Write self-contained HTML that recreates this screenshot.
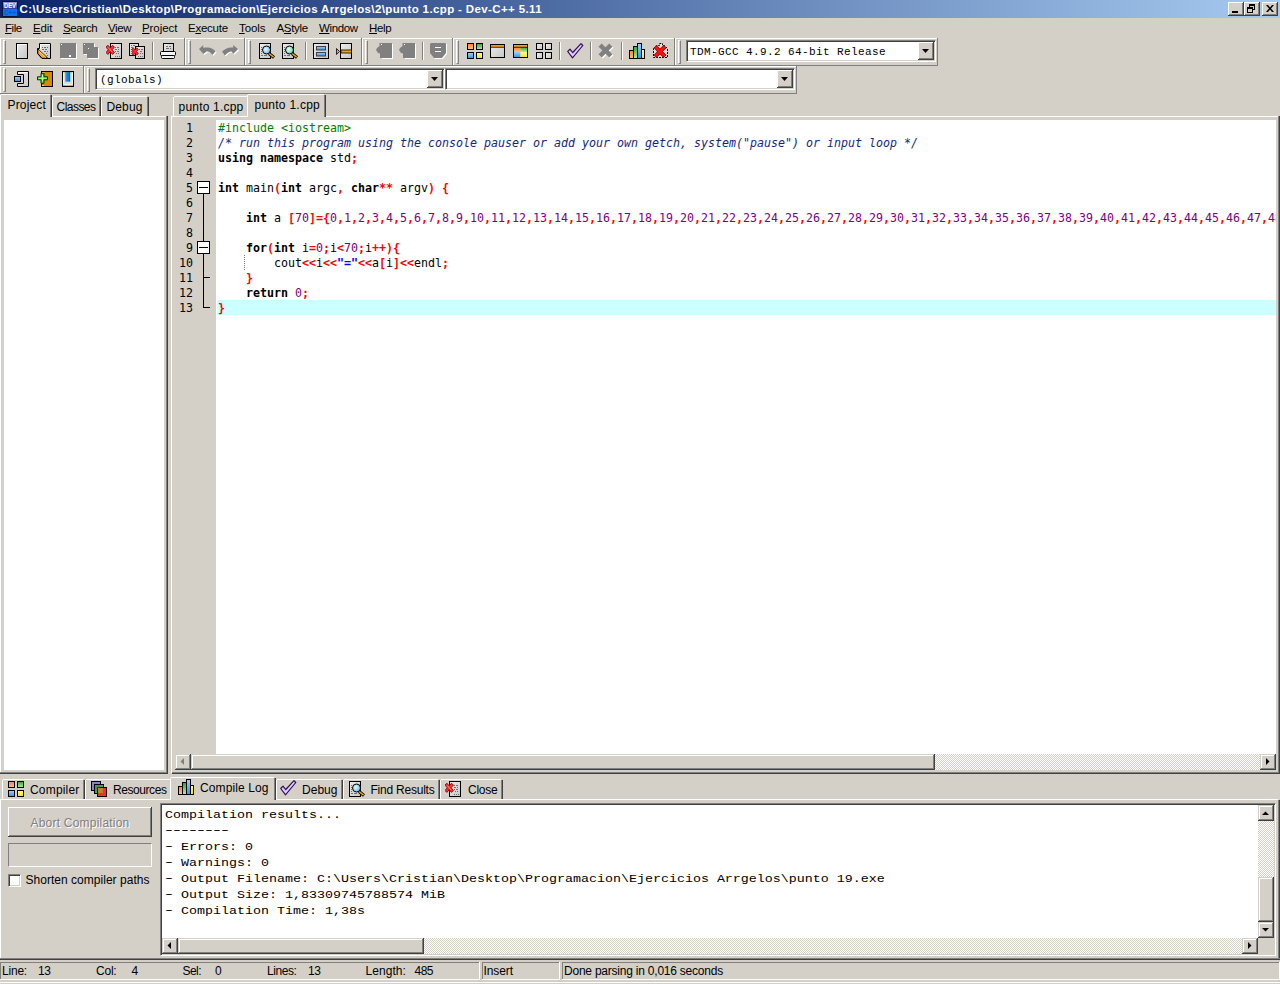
<!DOCTYPE html><html><head><meta charset="utf-8"><title>Dev-C++ 5.11</title><style>
*{box-sizing:border-box}
html,body{margin:0;padding:0}
body{width:1280px;height:984px;position:relative;overflow:hidden;background:#d4d0c8;
 font:12px "Liberation Sans",sans-serif;color:#000}
.a{position:absolute}
.t{position:absolute;white-space:pre;line-height:14px;height:14px}
#title{left:0;top:0;width:1280px;height:18px;background:linear-gradient(90deg,#0a246a 0%,#a6caf0 100%)}
#ttext{left:19.6px;top:2px;color:#fff;font:bold 11.5px 'Liberation Sans',sans-serif;line-height:14px;letter-spacing:.375px}
.wb{position:absolute;top:2px;width:16px;height:14px;background:#d4d0c8;
 box-shadow:inset -1px -1px 0 #404040,inset 1px 1px 0 #fff,inset -2px -2px 0 #808080}
.t u{text-decoration:underline;text-underline-offset:1px}
.hl{background:#fff}.sh{background:#808080}.dk{background:#404040}
.grip{position:absolute;width:3px;border-left:1px solid #fff;border-top:1px solid #fff;border-right:1px solid #808080;border-bottom:1px solid #808080}
.sep{position:absolute;width:2px;border-left:1px solid #808080;border-right:1px solid #fff}
.sunk{position:absolute;background:#fff;border:1px solid;border-color:#808080 #fff #fff #808080;
 box-shadow:inset 1px 1px 0 #404040,inset -1px -1px 0 #d4d0c8}
.btn{position:absolute;background:#d4d0c8;box-shadow:inset -1px -1px 0 #404040,inset 1px 1px 0 #fff,inset -2px -2px 0 #808080}
.sbtn{position:absolute;background:#d4d0c8;box-shadow:inset -1px -1px 0 #404040,inset 1px 1px 0 #d4d0c8,inset -2px -2px 0 #808080,inset 2px 2px 0 #fff}
.track{position:absolute;background:conic-gradient(#fff 25%,#d4d0c8 0 50%,#fff 0 75%,#d4d0c8 0) 0 0/2px 2px}
.tab{position:absolute;background:#d4d0c8;border-top:1px solid #fff;border-left:1px solid #fff;border-right:1px solid #404040;
 box-shadow:inset -1px 0 0 #808080;border-radius:2px 2px 0 0}
.code{position:absolute;white-space:pre;font:11.63px "DejaVu Sans Mono","Liberation Mono",monospace;line-height:15px;height:15px}
.k{font-weight:bold}.s{color:#f00;font-weight:bold}.n{color:#800080}.p{color:#008000}.c{color:#14287a;font-style:italic}.q{color:#00f;font-weight:bold}
.ln{position:absolute;white-space:pre;font:11.63px "DejaVu Sans Mono","Liberation Mono",monospace;line-height:15px;height:15px;width:22px;text-align:right;left:171px}
.log{position:absolute;white-space:pre;font:13.33px "Liberation Mono",monospace;line-height:16px;height:16px;left:165px;transform:scaleY(.88);transform-origin:0 0}
.hy{display:inline-block;transform:scaleX(1.5) translateY(-1.1px)}
.mono{font:13.33px "Liberation Mono",monospace}
</style></head><body>
<div id="title" class="a"></div>
<svg class="a" style="left:2px;top:1px" width="16" height="16" viewBox="0 0 16 16"><defs><linearGradient id="ti" x1="0" y1="0" x2="0" y2="1"><stop offset="0" stop-color="#9a9ad0"/><stop offset="1" stop-color="#2838a0"/></linearGradient></defs><rect width="16" height="16" fill="#0c1430"/><rect x="1" y="1" width="14" height="7" fill="url(#ti)"/><rect x="1" y="8" width="14" height="7" fill="#1272f0"/><text x="8" y="7.300" font-family="Liberation Sans,sans-serif" font-weight="bold" font-size="6.500" fill="#fff" text-anchor="middle" textLength="12" lengthAdjust="spacingAndGlyphs">DEV</text><text x="8" y="14" font-family="Liberation Sans,sans-serif" font-weight="bold" font-size="7" fill="#0858c8" text-anchor="middle" textLength="12" lengthAdjust="spacingAndGlyphs">C++</text></svg>
<div id="ttext" class="t">C:\Users\Cristian\Desktop\Programacion\Ejercicios Arrgelos\2\punto 1.cpp - Dev-C++ 5.11</div>
<div class="wb" style="left:1228px"><div class="a" style="left:4px;top:9px;width:6px;height:2px;background:#000"></div></div>
<div class="wb" style="left:1244px"><svg class="a" style="left:0;top:0" width="16" height="14" shape-rendering="crispEdges"><path d="M5 2h6v2h-6zM10 2h1v6h-1zM5 2h1v3h-1zM9 7h2v1h-2zM3 5h6v2h-6zM3 5h1v6h-1zM8 5h1v6h-1zM3 10h6v1h-6z" fill="#000"/></svg></div>
<div class="wb" style="left:1262px"><svg class="a" style="left:4px;top:3px" width="8" height="7" viewBox="0 0 8 7"><path d="M0 0h2l2 2.5L6 0h2L5 3.5 8 7H6L4 4.5 2 7H0l3-3.5z" fill="#000"/></svg></div>
<div class="t" style="left:5.0px;top:21px;font:11.5px 'Liberation Sans',sans-serif;line-height:14px;letter-spacing:-0.433px;"><u>F</u>ile</div>
<div class="t" style="left:33.0px;top:21px;font:11.5px 'Liberation Sans',sans-serif;line-height:14px;letter-spacing:-0.132px;"><u>E</u>dit</div>
<div class="t" style="left:63.0px;top:21px;font:11.5px 'Liberation Sans',sans-serif;line-height:14px;letter-spacing:-0.356px;"><u>S</u>earch</div>
<div class="t" style="left:108.0px;top:21px;font:11.5px 'Liberation Sans',sans-serif;line-height:14px;letter-spacing:-0.355px;"><u>V</u>iew</div>
<div class="t" style="left:142.0px;top:21px;font:11.5px 'Liberation Sans',sans-serif;line-height:14px;letter-spacing:-0.071px;"><u>P</u>roject</div>
<div class="t" style="left:188.0px;top:21px;font:11.5px 'Liberation Sans',sans-serif;line-height:14px;letter-spacing:-0.252px;">E<u>x</u>ecute</div>
<div class="t" style="left:239.0px;top:21px;font:11.5px 'Liberation Sans',sans-serif;line-height:14px;letter-spacing:-0.112px;"><u>T</u>ools</div>
<div class="t" style="left:276.5px;top:21px;font:11.5px 'Liberation Sans',sans-serif;line-height:14px;letter-spacing:-0.325px;">A<u>S</u>tyle</div>
<div class="t" style="left:319.0px;top:21px;font:11.5px 'Liberation Sans',sans-serif;line-height:14px;letter-spacing:-0.351px;"><u>W</u>indow</div>
<div class="t" style="left:369.0px;top:21px;font:11.5px 'Liberation Sans',sans-serif;line-height:14px;letter-spacing:-0.339px;"><u>H</u>elp</div>
<svg width="0" height="0" style="position:absolute"><defs>
<linearGradient id="gp" x1="0" y1="0" x2="1" y2="1"><stop offset="0" stop-color="#ececec"/><stop offset="1" stop-color="#c6c6c6"/></linearGradient>
<linearGradient id="go" x1="0" y1="0" x2="0" y2="1"><stop offset="0" stop-color="#ff8030"/><stop offset="1" stop-color="#ffc080"/></linearGradient>
<linearGradient id="gg" x1="0" y1="0" x2="0" y2="1"><stop offset="0" stop-color="#30a030"/><stop offset="1" stop-color="#b0f0a0"/></linearGradient>
<linearGradient id="gb" x1="0" y1="0" x2="0" y2="1"><stop offset="0" stop-color="#a0d0ff"/><stop offset="1" stop-color="#3090f0"/></linearGradient>
<linearGradient id="gy" x1="0" y1="0" x2="0" y2="1"><stop offset="0" stop-color="#ffff90"/><stop offset="1" stop-color="#f0e020"/></linearGradient>
<radialGradient id="gl" cx=".4" cy=".4" r=".6"><stop offset="0" stop-color="#e8f8ff"/><stop offset="1" stop-color="#70c0e8"/></radialGradient>
<radialGradient id="gl2" cx=".4" cy=".4" r=".6"><stop offset="0" stop-color="#e8fff0"/><stop offset="1" stop-color="#60d8a8"/></radialGradient>
</defs></svg>
<div class="a hl" style="left:0px;top:38px;width:185px;height:1px"></div>
<div class="a hl" style="left:0px;top:38px;width:1px;height:27px"></div>
<div class="a sh" style="left:0px;top:65px;width:185px;height:1px"></div>
<div class="a sh" style="left:184px;top:38px;width:1px;height:28px"></div>
<div class="grip" style="left:3px;top:40px;height:24px"></div>
<svg class="a" style="left:14px;top:43px" width="18" height="18" viewBox="0 0 18 18"><rect x="2.500" y="0.500" width="11" height="15" fill="url(#gp)" stroke="#000"/><path d="M3.500 14.500v-13h9" stroke="#fff" fill="none"/></svg>
<svg class="a" style="left:37px;top:43px" width="18" height="18" viewBox="0 0 18 18"><path d="M2.500 0.500H13.500V15.500H5L0.500 10.500V5.500H2.500z" fill="url(#gp)" stroke="#000"/><path d="M3.500 1.500H12.500M3.500 1.500V6" stroke="#fff" fill="none"/><path d="M0.800 5.800L10.800 15.300H5L0.800 10.600z" fill="#ffa818" stroke="#000" stroke-width="1"/><path d="M1.800 7.600L8.800 14.300" stroke="#ffe9b0" stroke-width="1" fill="none"/><path d="M5 4.500h1m1 0h2m1 0h1M5 6.500h2m1 0h2M7 8.500h2m1 0h1M9 10.500h1M10 12.500h1" stroke="#6a6a6a" fill="none"/></svg>
<svg class="a" style="left:60px;top:43px" width="18" height="18" viewBox="0 0 18 18"><rect x="1" y="1" width="16" height="15" fill="#fff"/><rect x="0" y="0" width="16" height="15" fill="#808080"/><rect x="1" y="1" width="1" height="1" fill="#fff"/><rect x="9" y="12" width="2" height="2" fill="#fff"/></svg>
<svg class="a" style="left:83px;top:43px" width="18" height="18" viewBox="0 0 18 18"><path d="M1 1h11v4h4v11h-11v-4h-4z" fill="#fff"/><path d="M0 0h11v4h4v11h-11v-4h-4z" fill="#808080"/><rect x="1" y="1" width="1" height="1" fill="#fff"/><rect x="5" y="5" width="1" height="1" fill="#fff"/></svg>
<svg class="a" style="left:106px;top:43px" width="18" height="18" viewBox="0 0 18 18"><rect x="4.500" y="0.500" width="11" height="15" fill="url(#gp)" stroke="#000"/><path d="M9 4.500h1m1 0h2M9 6.500h2m1 0h1M9 8.500h1m1 0h2M10 10.500h1m1 0h1M9 13.500h1m1 0h1m1 0h1" stroke="#707070" fill="none"/><path d="M0.00 4.10L1.90 2.20L4.20 4.90L6.50 2.20L8.40 4.10L6.10 6.80L8.40 9.50L6.50 11.40L4.20 8.70L1.90 11.40L0.00 9.50L2.30 6.80z" fill="#ff2c2c" stroke="#980000" stroke-width=".900" stroke-linejoin="round"/><path d="M2.200 4.500l4 4.600" stroke="#ff9a9a" stroke-width=".900" fill="none"/></svg>
<svg class="a" style="left:129px;top:43px" width="18" height="18" viewBox="0 0 18 18"><rect x="0.500" y="0.500" width="9" height="12" fill="url(#gp)" stroke="#000"/><rect x="6.500" y="3.500" width="9" height="12" fill="url(#gp)" stroke="#000"/><path d="M2 2.500h1m1 0h2M2 4.500h2M2 6.500h1M2 8.500h2M10 6.500h1m1 0h2M11 8.500h2M11 10.500h1m1 0h1M9 13.500h1m1 0h1m1 0h1" stroke="#707070" fill="none"/><path d="M2.70 6.40L4.30 4.80L6.00 6.90L7.70 4.80L9.30 6.40L7.60 8.50L9.30 10.60L7.70 12.20L6.00 10.10L4.30 12.20L2.70 10.60L4.40 8.50z" fill="#ff2c2c" stroke="#980000" stroke-width=".800" stroke-linejoin="round"/></svg>
<svg class="a" style="left:160px;top:43px" width="18" height="18" viewBox="0 0 18 18"><rect x="3.5" y="0.500" width="10" height="8" fill="url(#gp)" stroke="#000"/><path d="M6 3.5h2m1 0h2M6 5.500h3m1 0h1" stroke="#707070" fill="none"/><rect x="0.5" y="8.500" width="15" height="4" rx="1" fill="#f4f4f4" stroke="#000"/><rect x="1.500" y="12.500" width="13" height="3" rx="1" fill="#f4f4f4" stroke="#000"/></svg>
<div class="sep" style="left:152px;top:42px;height:18px"></div>
<div class="a hl" style="left:185px;top:38px;width:60px;height:1px"></div>
<div class="a hl" style="left:185px;top:38px;width:1px;height:27px"></div>
<div class="a sh" style="left:185px;top:65px;width:60px;height:1px"></div>
<div class="a sh" style="left:244px;top:38px;width:1px;height:28px"></div>
<div class="grip" style="left:188px;top:40px;height:24px"></div>
<svg class="a" style="left:199px;top:44px" width="18" height="18" viewBox="0 0 18 18"><g transform="translate(1,1)"><path d="M0 5.100L4.300 0.900V3.500H9C11.500 3.500 14.500 5 16.600 7.200L13.500 11C12 9.200 10.300 7.600 8 7.300L4.300 10z" fill="#fff"/></g><path d="M0 5.100L4.300 0.900V3.500H9C11.500 3.500 14.500 5 16.600 7.200L13.500 11C12 9.200 10.300 7.600 8 7.300L4.300 10z" fill="#808080"/></svg>
<svg class="a" style="left:222px;top:44px" width="18" height="18" viewBox="0 0 18 18"><g transform="translate(1,1)"><path d="M16.100 5.100L11.200 0.900V3.500H8.500C6 3.500 2.500 5.200 0 7.600L2.800 11.400C4.500 9.500 6.500 8 8.500 7.400H9.500L11.500 9.700z" fill="#fff"/></g><path d="M16.100 5.100L11.200 0.900V3.500H8.500C6 3.500 2.500 5.200 0 7.600L2.800 11.400C4.500 9.500 6.500 8 8.500 7.400H9.500L11.500 9.700z" fill="#808080"/></svg>
<div class="a hl" style="left:245px;top:38px;width:117px;height:1px"></div>
<div class="a hl" style="left:245px;top:38px;width:1px;height:27px"></div>
<div class="a sh" style="left:245px;top:65px;width:117px;height:1px"></div>
<div class="a sh" style="left:361px;top:38px;width:1px;height:28px"></div>
<div class="grip" style="left:248px;top:40px;height:24px"></div>
<svg class="a" style="left:259px;top:43px" width="18" height="18" viewBox="0 0 18 18"><rect x="0.5" y="0.500" width="11" height="15" fill="url(#gp)" stroke="#000"/><path d="M2 12.500h2m1 0h3M2 10.500h1M2 4.500h1M2 6.500h1M2 8.500h1" stroke="#707070" fill="none"/><path d="M10 10.500l5 4" stroke="#000" stroke-width="3.200" fill="none"/><path d="M10 10.500l4.600 3.700" stroke="#f0a020" stroke-width="1.600" fill="none"/><circle cx="7.500" cy="7" r="4" fill="url(#gl)" stroke="#000" stroke-width="1"/></svg>
<svg class="a" style="left:282px;top:43px" width="18" height="18" viewBox="0 0 18 18"><rect x="0.5" y="0.500" width="11" height="15" fill="url(#gp)" stroke="#000"/><path d="M2 12.500h2m1 0h3M2 10.500h1M2 4.500h1M2 6.500h1M2 8.500h1" stroke="#707070" fill="none"/><path d="M10 10.500l5 4" stroke="#000" stroke-width="3.200" fill="none"/><path d="M10 10.500l4.600 3.700" stroke="#f0a020" stroke-width="1.600" fill="none"/><circle cx="7.500" cy="7" r="4" fill="url(#gl2)" stroke="#000" stroke-width="1"/></svg>
<svg class="a" style="left:313px;top:43px" width="18" height="18" viewBox="0 0 18 18"><rect x="0.5" y="0.500" width="15" height="15" fill="url(#gp)" stroke="#000"/><rect x="3.500" y="3.500" width="9" height="3.500" fill="url(#gb)" stroke="#404040"/><rect x="3.500" y="9.500" width="9" height="3.500" fill="url(#gb)" stroke="#404040"/></svg>
<svg class="a" style="left:336px;top:43px" width="18" height="18" viewBox="0 0 18 18"><rect x="4.500" y="0.500" width="11" height="15" fill="url(#gp)" stroke="#000"/><rect x="5" y="7" width="10.500" height="3" fill="#f0a010" stroke="#000" stroke-width=".8"/><path d="M0.5 5.500l3 3-3 3z" fill="#f0a010" stroke="#000" stroke-width=".8"/></svg>
<div class="sep" style="left:305px;top:42px;height:18px"></div>
<div class="a hl" style="left:362px;top:38px;width:91px;height:1px"></div>
<div class="a hl" style="left:362px;top:38px;width:1px;height:27px"></div>
<div class="a sh" style="left:362px;top:65px;width:91px;height:1px"></div>
<div class="a sh" style="left:452px;top:38px;width:1px;height:28px"></div>
<div class="grip" style="left:365px;top:40px;height:24px"></div>
<svg class="a" style="left:376px;top:43px" width="18" height="18" viewBox="0 0 18 18"><g transform="translate(1,1)"><path d="M0 7l5-7h11v15h-11v-4z" fill="#fff"/></g><path d="M0 7l1-2 2.500-2v-3h12.500v15h-12v-4.500l-2-.5z" fill="#808080"/><rect x="5" y="1" width="1" height="1" fill="#fff"/></svg>
<svg class="a" style="left:399px;top:43px" width="18" height="18" viewBox="0 0 18 18"><g transform="translate(1,1)"><path d="M0 7l5-7h11v15h-11v-4z" fill="#fff"/></g><path d="M0 7l1-2 2.500-2v-3h12.500v15h-12v-4.500l-2-.5z" fill="#808080"/><rect x="5" y="1" width="1" height="1" fill="#fff"/></svg>
<svg class="a" style="left:430px;top:43px" width="18" height="18" viewBox="0 0 18 18"><g transform="translate(1,1)"><path d="M0 0h16v10l-4 5h-8l-4-5z" fill="#fff"/></g><path d="M0 1l1-1h14l1 1v9l-4 5h-8l-4-5z" fill="#808080"/><path d="M5 4.500h6M5 8.500h6" stroke="#fff" stroke-width="1.200"/></svg>
<div class="sep" style="left:422px;top:42px;height:18px"></div>
<div class="a hl" style="left:453px;top:38px;width:222px;height:1px"></div>
<div class="a hl" style="left:453px;top:38px;width:1px;height:27px"></div>
<div class="a sh" style="left:453px;top:65px;width:222px;height:1px"></div>
<div class="a sh" style="left:674px;top:38px;width:1px;height:28px"></div>
<div class="grip" style="left:456px;top:40px;height:24px"></div>
<svg class="a" style="left:467px;top:43px" width="18" height="18" viewBox="0 0 18 18"><rect x="0.5" y="0.5" width="6" height="6" fill="url(#go)" stroke="#000"/><rect x="9.5" y="0.5" width="6" height="6" fill="url(#gg)" stroke="#000"/><rect x="0.5" y="9.5" width="6" height="6" fill="url(#gb)" stroke="#000"/><rect x="9.5" y="9.5" width="6" height="6" fill="url(#gy)" stroke="#000"/></svg>
<svg class="a" style="left:490px;top:43px" width="18" height="18" viewBox="0 0 18 18"><rect x="0.5" y="1.500" width="14" height="13" fill="url(#gp)" stroke="#000"/><rect x="1" y="2" width="13" height="2" fill="#f0a010"/><path d="M1 4.300h13" stroke="#000" stroke-width=".8"/></svg>
<svg class="a" style="left:513px;top:43px" width="18" height="18" viewBox="0 0 18 18"><rect x="1" y="4" width="6.500" height="5" fill="url(#go)"/><rect x="7.500" y="4" width="6.500" height="5" fill="url(#gg)"/><rect x="1" y="9" width="6.500" height="5.500" fill="url(#gb)"/><rect x="7.500" y="9" width="6.500" height="5.500" fill="url(#gy)"/><rect x="0.5" y="1.500" width="14" height="13" fill="none" stroke="#000"/><rect x="1" y="2" width="13" height="2" fill="#f0a010"/><path d="M1 4.300h13" stroke="#000" stroke-width=".8"/></svg>
<svg class="a" style="left:536px;top:43px" width="18" height="18" viewBox="0 0 18 18"><rect x="0.5" y="0.5" width="6" height="6" fill="url(#gp)" stroke="#000"/><rect x="9.5" y="0.5" width="6" height="6" fill="url(#gp)" stroke="#000"/><rect x="0.5" y="9.5" width="6" height="6" fill="url(#gp)" stroke="#000"/><rect x="9.5" y="9.5" width="6" height="6" fill="url(#gp)" stroke="#000"/></svg>
<svg class="a" style="left:567px;top:43px" width="18" height="18" viewBox="0 0 18 18"><path d="M0.700 8.500l2.300-2.300 2.700 3.300 8.300-8.800 1.800 1.800-10.300 12.300z" fill="#c49cff" stroke="#2a1050" stroke-width="1.100" stroke-linejoin="round"/><path d="M2.300 8.300l3.400 4 8.300-9.800" stroke="#ead8ff" stroke-width="1.100" fill="none"/></svg>
<svg class="a" style="left:598px;top:43px" width="18" height="18" viewBox="0 0 18 18"><g transform="translate(1,1)"><path d="M0.5 3.700L3.700 0.500 7.500 4.300 11.300 0.500 14.500 3.700 10.700 7.500 14.500 11.300 11.300 14.500 7.500 10.700 3.700 14.500 0.500 11.300 4.300 7.500z" fill="#fff"/></g><path d="M0.5 3.700L3.700 0.500 7.500 4.300 11.300 0.500 14.500 3.700 10.700 7.500 14.500 11.300 11.300 14.500 7.500 10.700 3.700 14.500 0.500 11.300 4.300 7.500z" fill="#808080"/></svg>
<svg class="a" style="left:629px;top:43px" width="18" height="18" viewBox="0 0 18 18"><rect x="0.5" y="7.500" width="4" height="8" fill="url(#go)" stroke="#000"/><rect x="4.500" y="3.500" width="4" height="12" fill="url(#gg)" stroke="#000"/><rect x="8.500" y="0.500" width="4" height="15" fill="url(#gb)" stroke="#000"/><rect x="12.500" y="6.500" width="3" height="9" fill="url(#gy)" stroke="#000"/></svg>
<svg class="a" style="left:652px;top:43px" width="18" height="18" viewBox="0 0 18 18"><path d="M1.500 5.500l3-3h3v-2h3v2h2l3 3v9h-14z" fill="#e0e0e0" stroke="#000" stroke-dasharray="2 1"/><path d="M3 3.500l10 10M13 3.500l-10 10" stroke="#a00000" stroke-width="4" fill="none"/><path d="M3.300 3.800l9.400 9.400M12.700 3.800l-9.400 9.400" stroke="#ff1010" stroke-width="2.600" fill="none"/></svg>
<div class="sep" style="left:559px;top:42px;height:18px"></div>
<div class="sep" style="left:590px;top:42px;height:18px"></div>
<div class="sep" style="left:621px;top:42px;height:18px"></div>
<div class="a hl" style="left:675px;top:38px;width:263px;height:1px"></div>
<div class="a hl" style="left:675px;top:38px;width:1px;height:27px"></div>
<div class="a sh" style="left:675px;top:65px;width:263px;height:1px"></div>
<div class="a sh" style="left:937px;top:38px;width:1px;height:28px"></div>
<div class="grip" style="left:678px;top:40px;height:24px"></div>
<div class="sunk" style="left:686px;top:40px;width:250px;height:22px"></div>
<div class="btn" style="left:918px;top:42px;width:16px;height:18px"><svg class="a" style="left:4px;top:7px" width="7" height="4"><path d="M0 0h7l-3.500 4z" fill="#000"/></svg></div>
<div class="t" style="left:690px;top:45px;font:11px 'Liberation Mono',monospace;line-height:14px;letter-spacing:.4px">TDM-GCC 4.9.2 64-bit Release</div>
<div class="a hl" style="left:0px;top:66px;width:84px;height:1px"></div>
<div class="a hl" style="left:0px;top:66px;width:1px;height:27px"></div>
<div class="a sh" style="left:0px;top:93px;width:84px;height:1px"></div>
<div class="a sh" style="left:83px;top:66px;width:1px;height:28px"></div>
<div class="grip" style="left:3px;top:68px;height:24px"></div>
<svg class="a" style="left:14px;top:71px" width="18" height="18" viewBox="0 0 18 18"><path d="M3.500 0.500h11v15h-11v-3h6v-9h-6z" fill="url(#gp)" stroke="#000"/><path d="M4.500 1.500h9" stroke="#fff"/><rect x="0.500" y="5.500" width="6" height="5" fill="url(#gb)" stroke="#000"/></svg>
<svg class="a" style="left:37px;top:71px" width="18" height="18" viewBox="0 0 18 18"><rect x="4.500" y="0.500" width="11" height="15" fill="#d48806" stroke="#000"/><path d="M5.300 1.500h2M5.300 14.500h1.500" stroke="#f6dca8"/><path d="M4 2.300v3.500h-3.500v3h3.500v3.500h3v-3.500h3.500v-3h-3.500v-3.500z" fill="#4ce028" stroke="#0a3008" stroke-width="1"/><path d="M5.500 3.500v7M1.500 7.300h8" stroke="#b8ffa8" stroke-width="1"/></svg>
<svg class="a" style="left:60px;top:71px" width="18" height="18" viewBox="0 0 18 18"><rect x="2.500" y="0.500" width="11" height="15" fill="#e8a020" stroke="#000"/><path d="M3.500 1.500v12h9v-12" fill="#dcdcdc" stroke="#f4f4f4" stroke-width="1"/><rect x="5.500" y="1" width="4.600" height="9.600" fill="#0a84d0"/><path d="M6 1v9.500" stroke="#46a6e6"/><path d="M9.600 1v9.500" stroke="#0868a8"/></svg>
<div class="a hl" style="left:84px;top:66px;width:713px;height:1px"></div>
<div class="a hl" style="left:84px;top:66px;width:1px;height:27px"></div>
<div class="a sh" style="left:84px;top:93px;width:713px;height:1px"></div>
<div class="a sh" style="left:796px;top:66px;width:1px;height:28px"></div>
<div class="grip" style="left:87px;top:68px;height:24px"></div>
<div class="sunk" style="left:95px;top:68px;width:350px;height:22px"></div>
<div class="btn" style="left:427px;top:70px;width:16px;height:18px"><svg class="a" style="left:4px;top:7px" width="7" height="4"><path d="M0 0h7l-3.500 4z" fill="#000"/></svg></div>
<div class="t" style="left:100px;top:73px;font:11px 'Liberation Mono',monospace;line-height:14px;letter-spacing:.4px">(globals)</div>
<div class="sunk" style="left:445px;top:68px;width:350px;height:22px"></div>
<div class="btn" style="left:777px;top:70px;width:16px;height:18px"><svg class="a" style="left:4px;top:7px" width="7" height="4"><path d="M0 0h7l-3.500 4z" fill="#000"/></svg></div>
<div class="a" style="left:52px;top:116px;width:114px;height:1px;background:#fff"></div>
<div class="a" style="left:1px;top:94px;width:49px;height:1px;background:#fff"></div>
<div class="a" style="left:0px;top:95px;width:1px;height:22px;background:#fff"></div>
<div class="a" style="left:51px;top:95px;width:1px;height:22px;background:#404040"></div>
<div class="a" style="left:50px;top:95px;width:1px;height:22px;background:#808080"></div>
<div class="a" style="left:53px;top:96px;width:46px;height:1px;background:#fff"></div>
<div class="a" style="left:52px;top:97px;width:1px;height:19px;background:#fff"></div>
<div class="a" style="left:100px;top:97px;width:1px;height:19px;background:#404040"></div>
<div class="a" style="left:99px;top:97px;width:1px;height:19px;background:#808080"></div>
<div class="a" style="left:102px;top:96px;width:45px;height:1px;background:#fff"></div>
<div class="a" style="left:101px;top:97px;width:1px;height:19px;background:#fff"></div>
<div class="a" style="left:148px;top:97px;width:1px;height:19px;background:#404040"></div>
<div class="a" style="left:147px;top:97px;width:1px;height:19px;background:#808080"></div>
<div class="t" style="left:7.5px;top:98px;letter-spacing:0.163px;">Project</div>
<div class="t" style="left:56.5px;top:100px;letter-spacing:-0.527px;">Classes</div>
<div class="t" style="left:106.5px;top:100px;letter-spacing:0.125px;">Debug</div>
<div class="a" style="left:0px;top:117px;width:1px;height:655px;background:#fff"></div>
<div class="a" style="left:4px;top:120px;width:160px;height:650px;background:#fff"></div>
<div class="a" style="left:166px;top:116px;width:1px;height:657px;background:#808080"></div>
<div class="a" style="left:167px;top:116px;width:1px;height:658px;background:#404040"></div>
<div class="a" style="left:0px;top:772px;width:167px;height:1px;background:#808080"></div>
<div class="a" style="left:0px;top:773px;width:168px;height:1px;background:#404040"></div>
<div class="a" style="left:171px;top:116px;width:76px;height:1px;background:#fff"></div>
<div class="a" style="left:326px;top:116px;width:952px;height:1px;background:#fff"></div>
<div class="a" style="left:174px;top:96px;width:73px;height:1px;background:#fff"></div>
<div class="a" style="left:173px;top:97px;width:1px;height:19px;background:#fff"></div>
<div class="a" style="left:248px;top:94px;width:76px;height:1px;background:#fff"></div>
<div class="a" style="left:247px;top:95px;width:1px;height:22px;background:#fff"></div>
<div class="a" style="left:325px;top:95px;width:1px;height:22px;background:#404040"></div>
<div class="a" style="left:324px;top:95px;width:1px;height:22px;background:#808080"></div>
<div class="t" style="left:178.5px;top:100px;letter-spacing:0.207px;">punto 1.cpp</div>
<div class="t" style="left:254.5px;top:98px;letter-spacing:0.253px;">punto 1.cpp</div>
<div class="a" style="left:171px;top:117px;width:1px;height:656px;background:#fff"></div>
<div class="a" style="left:216px;top:120px;width:1060px;height:634px;background:#fff"></div>
<div class="a" style="left:1279px;top:116px;width:1px;height:658px;background:#404040"></div>
<div class="a" style="left:1278px;top:116px;width:1px;height:658px;background:#808080"></div>
<div class="a" style="left:172px;top:772px;width:1107px;height:1px;background:#808080"></div>
<div class="a" style="left:172px;top:773px;width:1108px;height:1px;background:#404040"></div>
<div class="a" style="left:217px;top:300px;width:1059px;height:15px;background:#ccffff"></div>
<div class="a" style="left:216px;top:121px;width:1060px;height:200px;overflow:hidden">
<div class="code" style="left:2px;top:0px"><span class="p">#include &lt;iostream&gt;</span></div>
<div class="code" style="left:2px;top:15px"><span class="c">/* run this program using the console pauser or add your own getch, system(&quot;pause&quot;) or input loop */</span></div>
<div class="code" style="left:2px;top:30px"><span class="k">using</span> <span class="k">namespace</span> std<span class="s">;</span></div>
<div class="code" style="left:2px;top:45px"></div>
<div class="code" style="left:2px;top:60px"><span class="k">int</span> main<span class="s">(</span><span class="k">int</span> argc<span class="s">,</span> <span class="k">char</span><span class="s">**</span> argv<span class="s">)</span> <span class="s">{</span></div>
<div class="code" style="left:2px;top:75px"></div>
<div class="code" style="left:2px;top:90px">    <span class="k">int</span> a <span class="s">[</span><span class="n">70</span><span class="s">]={</span><span class="n">0</span><span class="s">,</span><span class="n">1</span><span class="s">,</span><span class="n">2</span><span class="s">,</span><span class="n">3</span><span class="s">,</span><span class="n">4</span><span class="s">,</span><span class="n">5</span><span class="s">,</span><span class="n">6</span><span class="s">,</span><span class="n">7</span><span class="s">,</span><span class="n">8</span><span class="s">,</span><span class="n">9</span><span class="s">,</span><span class="n">10</span><span class="s">,</span><span class="n">11</span><span class="s">,</span><span class="n">12</span><span class="s">,</span><span class="n">13</span><span class="s">,</span><span class="n">14</span><span class="s">,</span><span class="n">15</span><span class="s">,</span><span class="n">16</span><span class="s">,</span><span class="n">17</span><span class="s">,</span><span class="n">18</span><span class="s">,</span><span class="n">19</span><span class="s">,</span><span class="n">20</span><span class="s">,</span><span class="n">21</span><span class="s">,</span><span class="n">22</span><span class="s">,</span><span class="n">23</span><span class="s">,</span><span class="n">24</span><span class="s">,</span><span class="n">25</span><span class="s">,</span><span class="n">26</span><span class="s">,</span><span class="n">27</span><span class="s">,</span><span class="n">28</span><span class="s">,</span><span class="n">29</span><span class="s">,</span><span class="n">30</span><span class="s">,</span><span class="n">31</span><span class="s">,</span><span class="n">32</span><span class="s">,</span><span class="n">33</span><span class="s">,</span><span class="n">34</span><span class="s">,</span><span class="n">35</span><span class="s">,</span><span class="n">36</span><span class="s">,</span><span class="n">37</span><span class="s">,</span><span class="n">38</span><span class="s">,</span><span class="n">39</span><span class="s">,</span><span class="n">40</span><span class="s">,</span><span class="n">41</span><span class="s">,</span><span class="n">42</span><span class="s">,</span><span class="n">43</span><span class="s">,</span><span class="n">44</span><span class="s">,</span><span class="n">45</span><span class="s">,</span><span class="n">46</span><span class="s">,</span><span class="n">47</span><span class="s">,</span><span class="n">48</span></div>
<div class="code" style="left:2px;top:105px"></div>
<div class="code" style="left:2px;top:120px">    <span class="k">for</span><span class="s">(</span><span class="k">int</span> i<span class="s">=</span><span class="n">0</span><span class="s">;</span>i<span class="s">&lt;</span><span class="n">70</span><span class="s">;</span>i<span class="s">++){</span></div>
<div class="code" style="left:2px;top:135px">        cout<span class="s">&lt;&lt;</span>i<span class="s">&lt;&lt;</span><span class="q">&quot;=&quot;</span><span class="s">&lt;&lt;</span>a<span class="s">[</span>i<span class="s">]&lt;&lt;</span>endl<span class="s">;</span></div>
<div class="code" style="left:2px;top:150px">    <span class="s">}</span></div>
<div class="code" style="left:2px;top:165px">    <span class="k">return</span> <span class="n">0</span><span class="s">;</span></div>
<div class="code" style="left:2px;top:180px"><span class="s">}</span></div>
</div>
<div class="ln" style="top:121px">1</div>
<div class="ln" style="top:136px">2</div>
<div class="ln" style="top:151px">3</div>
<div class="ln" style="top:166px">4</div>
<div class="ln" style="top:181px">5</div>
<div class="ln" style="top:196px">6</div>
<div class="ln" style="top:211px">7</div>
<div class="ln" style="top:226px">8</div>
<div class="ln" style="top:241px">9</div>
<div class="ln" style="top:256px">10</div>
<div class="ln" style="top:271px">11</div>
<div class="ln" style="top:286px">12</div>
<div class="ln" style="top:301px">13</div>
<div class="a" style="left:197px;top:181px;width:13px;height:13px;border:1px solid #000;background:#fff"></div>
<div class="a" style="left:199px;top:187px;width:9px;height:1px;background:#000"></div>
<div class="a" style="left:197px;top:241px;width:13px;height:13px;border:1px solid #000;background:#fff"></div>
<div class="a" style="left:199px;top:247px;width:9px;height:1px;background:#000"></div>
<div class="a" style="left:203px;top:194px;width:1px;height:47px;background:#000"></div>
<div class="a" style="left:203px;top:254px;width:1px;height:54px;background:#000"></div>
<div class="a" style="left:203px;top:277px;width:7px;height:1px;background:#000"></div>
<div class="a" style="left:203px;top:307px;width:7px;height:1px;background:#000"></div>
<div class="a" style="left:244px;top:255px;width:1px;height:15px;background:repeating-linear-gradient(180deg,#808080 0 1px,transparent 1px 2px)"></div>
<div class="track" style="left:175px;top:754px;width:1101px;height:16px"></div>
<div class="sbtn" style="left:175px;top:754px;width:16px;height:16px"><svg class="a" style="left:5px;top:4px" width="5" height="8"><path d="M4 0v7l-3.500-3.500z" fill="#808080"/></svg></div>
<div class="sbtn" style="left:1260px;top:754px;width:16px;height:16px"><svg class="a" style="left:6px;top:4px" width="5" height="8"><path d="M0 0v7l3.500-3.500z" fill="#000"/></svg></div>
<div class="sbtn" style="left:191px;top:754px;width:744px;height:16px"></div>
<div class="a" style="left:0px;top:799px;width:171px;height:1px;background:#fff"></div>
<div class="a" style="left:276px;top:799px;width:1002px;height:1px;background:#fff"></div>
<div class="a" style="left:0px;top:800px;width:1px;height:159px;background:#fff"></div>
<div class="a" style="left:1278px;top:800px;width:1px;height:160px;background:#808080"></div>
<div class="a" style="left:1279px;top:800px;width:1px;height:160px;background:#404040"></div>
<div class="a" style="left:3px;top:779px;width:80px;height:1px;background:#fff"></div>
<div class="a" style="left:2px;top:780px;width:1px;height:19px;background:#fff"></div>
<div class="a" style="left:84px;top:780px;width:1px;height:19px;background:#404040"></div>
<div class="a" style="left:83px;top:780px;width:1px;height:19px;background:#808080"></div>
<div class="a" style="left:86px;top:779px;width:84px;height:1px;background:#fff"></div>
<div class="a" style="left:85px;top:780px;width:1px;height:19px;background:#fff"></div>
<div class="a" style="left:171px;top:777px;width:103px;height:1px;background:#fff"></div>
<div class="a" style="left:170px;top:778px;width:1px;height:22px;background:#fff"></div>
<div class="a" style="left:275px;top:778px;width:1px;height:22px;background:#404040"></div>
<div class="a" style="left:274px;top:778px;width:1px;height:22px;background:#808080"></div>
<div class="a" style="left:277px;top:779px;width:64px;height:1px;background:#fff"></div>
<div class="a" style="left:276px;top:780px;width:1px;height:19px;background:#fff"></div>
<div class="a" style="left:342px;top:780px;width:1px;height:19px;background:#404040"></div>
<div class="a" style="left:341px;top:780px;width:1px;height:19px;background:#808080"></div>
<div class="a" style="left:344px;top:779px;width:94px;height:1px;background:#fff"></div>
<div class="a" style="left:343px;top:780px;width:1px;height:19px;background:#fff"></div>
<div class="a" style="left:439px;top:780px;width:1px;height:19px;background:#404040"></div>
<div class="a" style="left:438px;top:780px;width:1px;height:19px;background:#808080"></div>
<div class="a" style="left:441px;top:779px;width:60px;height:1px;background:#fff"></div>
<div class="a" style="left:440px;top:780px;width:1px;height:19px;background:#fff"></div>
<div class="a" style="left:502px;top:780px;width:1px;height:19px;background:#404040"></div>
<div class="a" style="left:501px;top:780px;width:1px;height:19px;background:#808080"></div>
<svg class="a" style="left:8px;top:781px" width="18" height="18" viewBox="0 0 18 18"><rect x="0.5" y="0.5" width="6" height="6" fill="url(#go)" stroke="#000"/><rect x="9.5" y="0.5" width="6" height="6" fill="url(#gg)" stroke="#000"/><rect x="0.5" y="9.5" width="6" height="6" fill="url(#gb)" stroke="#000"/><rect x="9.5" y="9.5" width="6" height="6" fill="url(#gy)" stroke="#000"/></svg>
<div class="t" style="left:30px;top:783px;letter-spacing:0.186px;">Compiler</div>
<svg class="a" style="left:91px;top:781px" width="18" height="18" viewBox="0 0 18 18"><rect x="0.5" y="0.500" width="9" height="9" fill="#8080e0" stroke="#000"/><rect x="3.500" y="3.500" width="9" height="9" fill="#40b040" stroke="#000"/><rect x="6.500" y="6.500" width="9" height="9" fill="#f03030" stroke="#000"/><rect x="4" y="4" width="5.500" height="5.500" fill="#6060a0" opacity=".5"/><rect x="7" y="7" width="5" height="5" fill="#c08030"/></svg>
<div class="t" style="left:113px;top:783px;letter-spacing:-0.429px;">Resources</div>
<svg class="a" style="left:178px;top:779px" width="18" height="18" viewBox="0 0 18 18"><rect x="0.5" y="7.500" width="4" height="8" fill="url(#go)" stroke="#000"/><rect x="4.500" y="3.500" width="4" height="12" fill="url(#gg)" stroke="#000"/><rect x="8.500" y="0.500" width="4" height="15" fill="url(#gb)" stroke="#000"/><rect x="12.500" y="6.500" width="3" height="9" fill="url(#gy)" stroke="#000"/></svg>
<div class="t" style="left:200px;top:781px;letter-spacing:0.102px;">Compile Log</div>
<svg class="a" style="left:280px;top:780px" width="18" height="18" viewBox="0 0 18 18"><path d="M0.700 8.500l2.300-2.300 2.700 3.300 8.300-8.800 1.800 1.800-10.300 12.300z" fill="#c49cff" stroke="#2a1050" stroke-width="1.100" stroke-linejoin="round"/><path d="M2.300 8.300l3.400 4 8.300-9.800" stroke="#ead8ff" stroke-width="1.100" fill="none"/></svg>
<div class="t" style="left:302px;top:783px;letter-spacing:0.025px;">Debug</div>
<svg class="a" style="left:349px;top:781px" width="18" height="18" viewBox="0 0 18 18"><rect x="0.5" y="0.500" width="11" height="15" fill="url(#gp)" stroke="#000"/><path d="M2 12.500h2m1 0h3M2 10.500h1M2 4.500h1M2 6.500h1M2 8.500h1" stroke="#707070" fill="none"/><path d="M10 10.500l5 4" stroke="#000" stroke-width="3.200" fill="none"/><path d="M10 10.500l4.600 3.700" stroke="#f0a020" stroke-width="1.600" fill="none"/><circle cx="7.500" cy="7" r="4" fill="url(#gl)" stroke="#000" stroke-width="1"/></svg>
<div class="t" style="left:370.5px;top:783px;letter-spacing:-0.225px;">Find Results</div>
<svg class="a" style="left:445px;top:781px" width="18" height="18" viewBox="0 0 18 18"><rect x="4.500" y="0.500" width="11" height="15" fill="url(#gp)" stroke="#000"/><path d="M9 4.500h1m1 0h2M9 6.500h2m1 0h1M9 8.500h1m1 0h2M10 10.500h1m1 0h1M9 13.500h1m1 0h1m1 0h1" stroke="#707070" fill="none"/><path d="M0.00 4.10L1.90 2.20L4.20 4.90L6.50 2.20L8.40 4.10L6.10 6.80L8.40 9.50L6.50 11.40L4.20 8.70L1.90 11.40L0.00 9.50L2.30 6.80z" fill="#ff2c2c" stroke="#980000" stroke-width=".900" stroke-linejoin="round"/><path d="M2.200 4.500l4 4.600" stroke="#ff9a9a" stroke-width=".900" fill="none"/></svg>
<div class="t" style="left:468px;top:783px;letter-spacing:-0.237px;">Close</div>
<div class="btn" style="left:8px;top:807px;width:144px;height:30px"></div>
<div class="t" style="left:30.5px;top:816px;letter-spacing:0.212px;color:#808080;text-shadow:1px 1px 0 #fff">Abort Compilation</div>
<div class="a" style="left:8px;top:843px;width:144px;height:24px;border:1px solid;border-color:#808080 #fff #fff #808080"></div>
<div class="sunk" style="left:8px;top:874px;width:13px;height:13px"></div>
<div class="t" style="left:25.5px;top:873px;letter-spacing:0.027px;">Shorten compiler paths</div>
<div class="sunk" style="left:160px;top:803px;width:1116px;height:153px"></div>
<div class="log" style="top:808px">Compilation results...</div>
<div class="log" style="top:824px"><span class="hy">-</span><span class="hy">-</span><span class="hy">-</span><span class="hy">-</span><span class="hy">-</span><span class="hy">-</span><span class="hy">-</span><span class="hy">-</span></div>
<div class="log" style="top:840px"><span class="hy">-</span> Errors: 0</div>
<div class="log" style="top:856px"><span class="hy">-</span> Warnings: 0</div>
<div class="log" style="top:872px"><span class="hy">-</span> Output Filename: C:\Users\Cristian\Desktop\Programacion\Ejercicios Arrgelos\punto 19.exe</div>
<div class="log" style="top:888px"><span class="hy">-</span> Output Size: 1,83309745788574 MiB</div>
<div class="log" style="top:904px"><span class="hy">-</span> Compilation Time: 1,38s</div>
<div class="track" style="left:1258px;top:805px;width:16px;height:133px"></div>
<div class="sbtn" style="left:1258px;top:805px;width:16px;height:16px"><svg class="a" style="left:4px;top:6px" width="8" height="4"><path d="M0 4h7l-3.500-3.500z" fill="#000"/></svg></div>
<div class="sbtn" style="left:1258px;top:922px;width:16px;height:16px"><svg class="a" style="left:4px;top:6px" width="8" height="4"><path d="M0 0h7l-3.500 3.500z" fill="#000"/></svg></div>
<div class="sbtn" style="left:1258px;top:877px;width:16px;height:45px"></div>
<div class="track" style="left:162px;top:938px;width:1096px;height:16px"></div>
<div class="sbtn" style="left:162px;top:938px;width:16px;height:16px"><svg class="a" style="left:5px;top:4px" width="5" height="8"><path d="M4 0v7l-3.500-3.500z" fill="#000"/></svg></div>
<div class="sbtn" style="left:1242px;top:938px;width:16px;height:16px"><svg class="a" style="left:6px;top:4px" width="5" height="8"><path d="M0 0v7l3.500-3.500z" fill="#000"/></svg></div>
<div class="sbtn" style="left:178px;top:938px;width:246px;height:16px"></div>
<div class="a" style="left:1258px;top:938px;width:16px;height:16px;background:#d4d0c8"></div>
<div class="a" style="left:0px;top:958px;width:1280px;height:1px;background:#808080"></div>
<div class="a" style="left:0px;top:959px;width:1280px;height:1px;background:#404040"></div>
<div class="a" style="left:0px;top:962px;width:480px;height:1px;background:#808080"></div>
<div class="a" style="left:0px;top:962px;width:1px;height:17px;background:#808080"></div>
<div class="a" style="left:0px;top:979px;width:480px;height:1px;background:#fff"></div>
<div class="a" style="left:479px;top:962px;width:1px;height:18px;background:#fff"></div>
<div class="a" style="left:482px;top:962px;width:78px;height:1px;background:#808080"></div>
<div class="a" style="left:482px;top:962px;width:1px;height:17px;background:#808080"></div>
<div class="a" style="left:482px;top:979px;width:78px;height:1px;background:#fff"></div>
<div class="a" style="left:559px;top:962px;width:1px;height:18px;background:#fff"></div>
<div class="a" style="left:562px;top:962px;width:718px;height:1px;background:#808080"></div>
<div class="a" style="left:562px;top:962px;width:1px;height:17px;background:#808080"></div>
<div class="a" style="left:562px;top:979px;width:718px;height:1px;background:#fff"></div>
<div class="a" style="left:1279px;top:962px;width:1px;height:18px;background:#fff"></div>
<div class="a" style="left:0px;top:982px;width:1280px;height:1px;background:#fff"></div>
<div class="t" style="left:2px;top:964px;letter-spacing:-0.206px;">Line:</div>
<div class="t" style="left:38px;top:964px;letter-spacing:-0.430px;">13</div>
<div class="t" style="left:96px;top:964px;letter-spacing:-0.211px;">Col:</div>
<div class="t" style="left:131.5px;top:964px;letter-spacing:-0.688px;">4</div>
<div class="t" style="left:182.5px;top:964px;letter-spacing:-0.547px;">Sel:</div>
<div class="t" style="left:215px;top:964px;letter-spacing:-0.188px;">0</div>
<div class="t" style="left:267px;top:964px;letter-spacing:-0.422px;">Lines:</div>
<div class="t" style="left:308px;top:964px;letter-spacing:-0.430px;">13</div>
<div class="t" style="left:365.5px;top:964px;letter-spacing:0.065px;">Length:</div>
<div class="t" style="left:414.5px;top:964px;letter-spacing:-0.510px;">485</div>
<div class="t" style="left:483.5px;top:964px;letter-spacing:-0.086px;">Insert</div>
<div class="t" style="left:564px;top:964px;letter-spacing:-0.223px;">Done parsing in 0,016 seconds</div>
</body></html>
